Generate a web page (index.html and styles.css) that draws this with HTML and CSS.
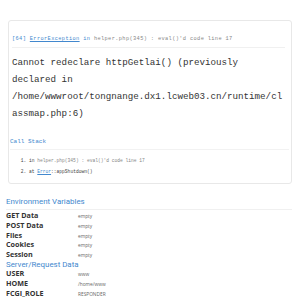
FILE: index.html
```html
<!DOCTYPE html>
<html lang="en">
<head>
    <meta charset="UTF-8">
    <title>System Error</title>
    <link rel="stylesheet" href="styles.css">
</head>
<body>
    <div class="exception">
        <div class="message">
            <h2 class="head">
                [64]&nbsp;<abbr title="think\exception\ErrorException">ErrorException</abbr> in <a class="toggle">helper.php(345) : eval()'d code line 17</a>
            </h2>
            <h1>Cannot redeclare httpGetlai() (previously declared in /home/wwwroot/tongnange.dx1.lcweb03.cn/runtime/classmap.php:6)</h1>
        </div>
        <div class="trace">
            <h2>Call Stack</h2>
            <ol>
                <li>in <a class="toggle">helper.php(345) : eval()'d code line 17</a></li>
                <li>at <abbr title="think\Error">Error</abbr>::appShutdown()</li>
            </ol>
        </div>
    </div>

    <!-- Exception Variables -->
    <div class="exception-var">
        <h2 class="section rule">Environment Variables</h2>
        <div class="row"><strong>GET Data</strong><small>empty</small></div>
        <div class="row"><strong>POST Data</strong><small>empty</small></div>
        <div class="row"><strong>Files</strong><small>empty</small></div>
        <div class="row"><strong>Cookies</strong><small>empty</small></div>
        <div class="row"><strong>Session</strong><small>empty</small></div>
        <h2 class="section">Server/Request Data</h2>
        <div class="row"><strong>USER</strong><small>www</small></div>
        <div class="row"><strong>HOME</strong><small>/home/www</small></div>
        <div class="row"><strong>FCGI_ROLE</strong><small>RESPONDER</small></div>
        <div class="row"><strong>SCRIPT_FILENAME</strong><small>/home/wwwroot/tongnange.dx1.lcweb03.cn/public/index.php</small></div>
    </div>
</body>
</html>
```

FILE: styles.css
```css
* {
    box-sizing: border-box;
}

body {
    margin: 0;
    padding: 0 8px 0 6px;
    color: #333;
    background: #fff;
    font-family: "Open Sans", "Liberation Sans", sans-serif;
}

h1, h2, ol {
    margin: 0;
}

abbr {
    color: #4288ce;
    text-decoration: underline;
}

a {
    color: #868686;
}

/* Exception box */
.exception {
    margin: 20px 0 0 2px;
    border: 1px solid #e8e8e8;
    border-radius: 3px;
    font-family: "Liberation Mono", monospace;
}

.message {
    padding: 0 6px 0 3px;
}

.message .head {
    color: #4288ce;
    font-weight: 400;
    font-size: 5.3px;
    letter-spacing: 0.38px;
    line-height: 10px;
    padding: 13px 0 3px;
    border-bottom: 1px solid #f0f0f0;
}

.message h1 {
    font-size: 9.2px;
    font-weight: 400;
    line-height: 17px;
    padding-top: 6px;
    overflow-wrap: break-word;
}

.trace {
    padding: 0 2px 6px 1px;
}

.trace h2 {
    color: #4288ce;
    font-weight: 400;
    font-size: 6px;
    line-height: 10px;
    padding: 15px 0 2px;
    border-bottom: 1px solid #f2f2f2;
}

.trace ol {
    padding: 5px 0 0 19px;
    font-size: 4.6px;
    line-height: 11px;
    color: #444;
}

/* Variables */
.exception-var {
    margin-top: 13px;
}

.section {
    color: #4288ce;
    font-family: Roboto, "Open Sans", sans-serif;
    font-weight: 400;
    font-size: 7.9px;
    line-height: 10px;
}

.section.rule {
    padding-bottom: 2px;
    border-bottom: 1px solid #f0f0f0;
    margin-bottom: 1px;
}

.exception-var > .section:not(.rule) {
    line-height: 9px;
}

.row {
    display: flex;
    align-items: baseline;
    line-height: 8.8px;
}

.row strong {
    width: 72px;
    flex: none;
    font-size: 7.2px;
    font-weight: 700;
    white-space: nowrap;
}

.row small {
    font-size: 4.8px;
    color: #666;
    white-space: nowrap;
}
```
